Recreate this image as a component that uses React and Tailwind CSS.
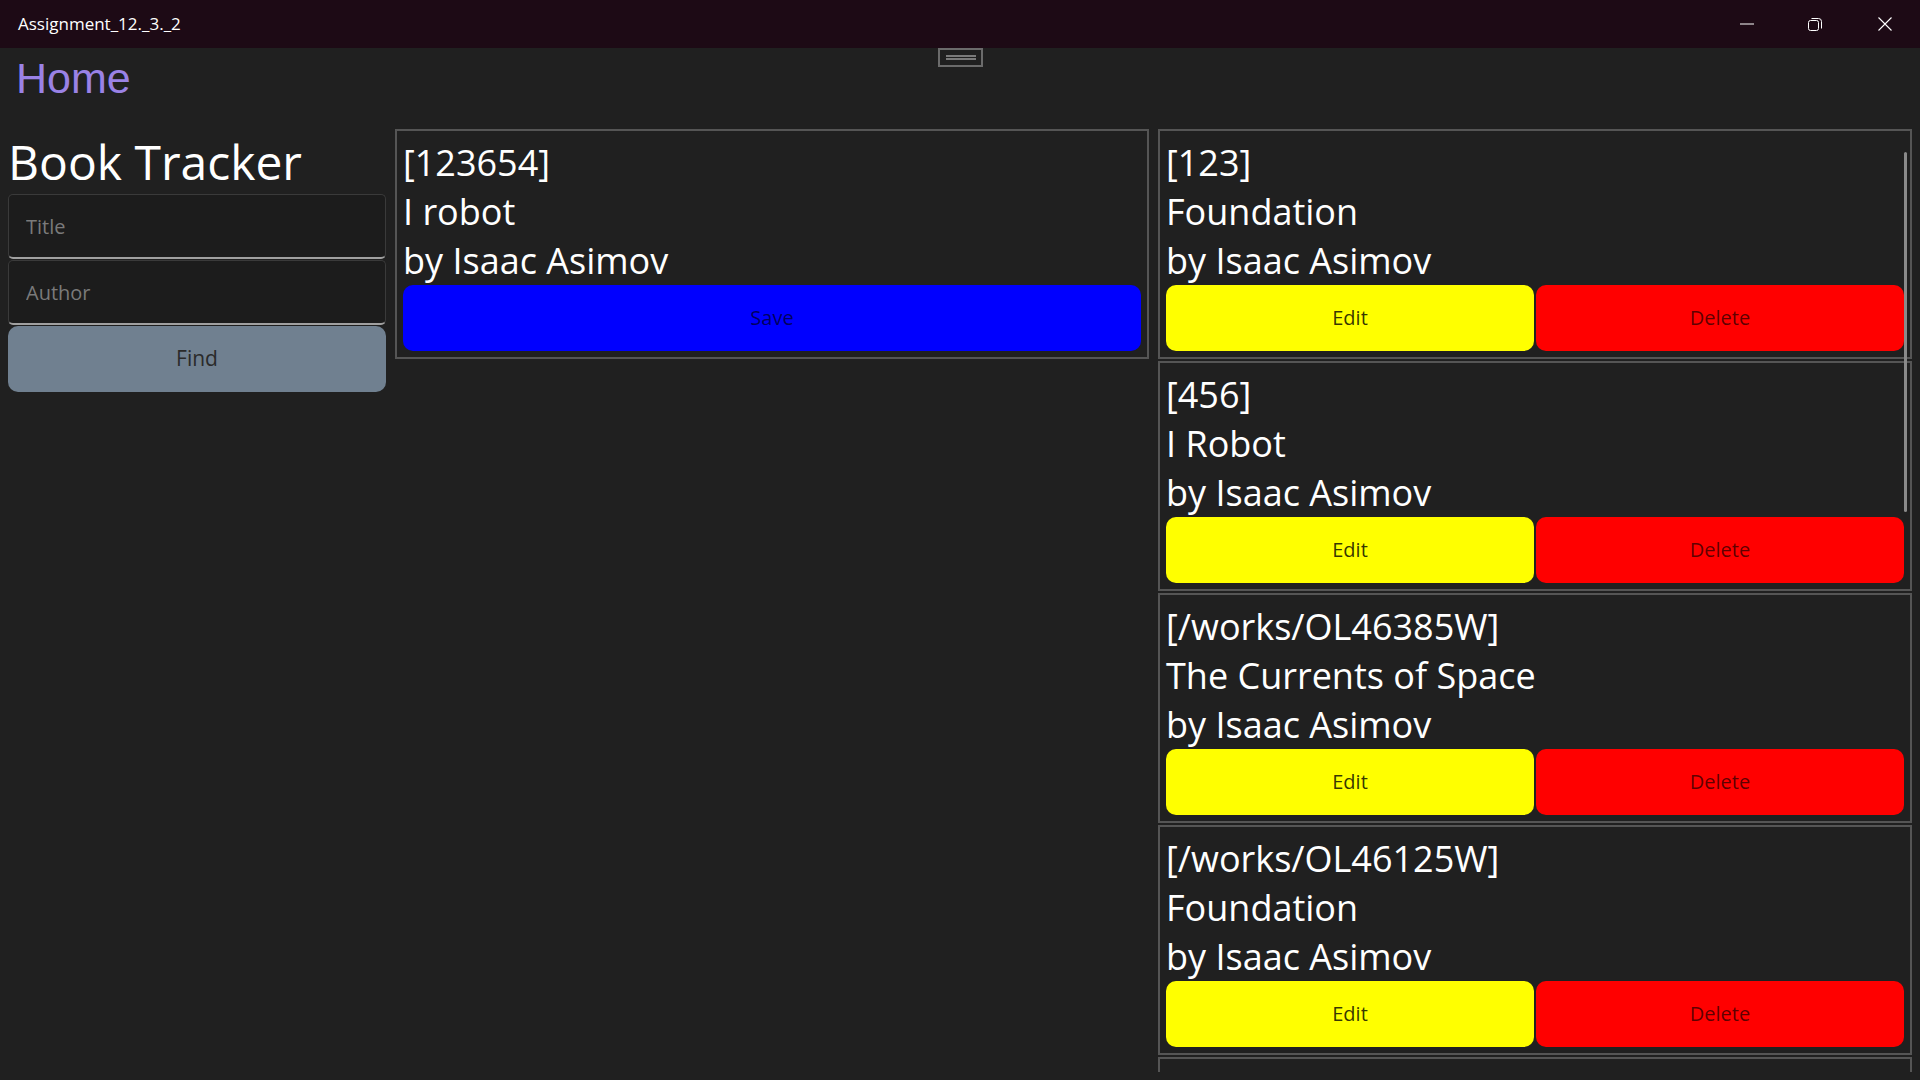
import React from 'react';

const books = [
    { id: '123', title: 'Foundation', author: 'Isaac Asimov' },
    { id: '456', title: 'I Robot', author: 'Isaac Asimov' },
    { id: '/works/OL46385W', title: 'The Currents of Space', author: 'Isaac Asimov' },
    { id: '/works/OL46125W', title: 'Foundation', author: 'Isaac Asimov' },
];

const BookLines = ({ book }) => (
    <div className="text-[36px] leading-[49px] text-white">
        <div>[{book.id}]</div>
        <div>{book.title}</div>
        <div>by {book.author}</div>
    </div>
);

const TitleBar = () => (
    <div className="h-[48px] bg-[#1d0a15] flex items-center justify-between text-white">
        <div className="pl-[18px] text-[17px]">Assignment_12._3._2</div>
        <div className="flex items-center h-full pr-[6px]">
            <div className="w-[58px] h-full flex items-center justify-center">
                <svg width="16" height="16" viewBox="0 0 16 16"><path d="M1 8h14" stroke="white" strokeWidth="1" /></svg>
            </div>
            <div className="w-[58px] h-full flex items-center justify-center ml-[10px]">
                <svg width="16" height="16" viewBox="0 0 16 16" fill="none" stroke="white" strokeWidth="1">
                    <rect x="1.5" y="4.5" width="10" height="10" rx="2" />
                    <path d="M4.5 2.5h7a3 3 0 0 1 3 3v7" />
                </svg>
            </div>
            <div className="w-[58px] h-full flex items-center justify-center ml-[12px]">
                <svg width="16" height="16" viewBox="0 0 16 16"><path d="M1.5 1.5l13 13M14.5 1.5l-13 13" stroke="white" strokeWidth="1.1" /></svg>
            </div>
        </div>
    </div>
);

const App = () => {
    return (
        <div className="w-[1920px] h-[1080px] overflow-hidden bg-[#202020] flex flex-col" style={{ fontFamily: '"Open Sans", "Noto Sans", sans-serif' }}>
            <TitleBar />
            <div className="relative h-[81px]">
                <div className="absolute left-[938px] top-0 w-[45px] h-[19px] border-2 border-[#6b6b6b] flex flex-col items-center justify-center gap-[1px]">
                    <div className="w-[30px] h-[2px] bg-[#7a7a7a]" />
                    <div className="w-[30px] h-[2px] bg-[#7a7a7a]" />
                </div>
                <div className="pl-[16px] pt-[5px] text-[43px] leading-[50px] text-[#9a82e6]" style={{ fontFamily: '"Liberation Sans", Arial, sans-serif' }}>
                    Home
                </div>
            </div>

            <div className="flex-1 min-h-0 grid grid-cols-[378px_1fr_1fr] gap-[9px] px-[8px] pb-[8px]">
                <div className="flex flex-col">
                    <div className="text-[48px] leading-[65px] text-white">Book Tracker</div>
                    <input
                        placeholder="Title"
                        className="h-[65px] rounded-[5px] border border-[#3a3a3a] border-b-2 border-b-[#a0a0a0] bg-[#1c1c1c] px-[17px] text-[20px] text-white placeholder-[#7a7a7a] outline-none"
                    />
                    <input
                        placeholder="Author"
                        className="mt-[1px] h-[65px] rounded-[5px] border border-[#3a3a3a] border-b-2 border-b-[#a0a0a0] bg-[#1c1c1c] px-[17px] text-[20px] text-white placeholder-[#7a7a7a] outline-none"
                    />
                    <button className="mt-[1px] h-[66px] rounded-[10px] bg-[#708090] text-[21px] text-[#2a2a2a]">Find</button>
                </div>

                <div className="self-start border-2 border-[#555555] pt-[7px] px-[6px] pb-[6px]">
                    <BookLines book={{ id: '123654', title: 'I robot', author: 'Isaac Asimov' }} />
                    <button className="w-full h-[66px] rounded-[10px] bg-[#0000ff] text-[20px] text-black/65">Save</button>
                </div>

                <div className="relative overflow-hidden flex flex-col gap-[2px]">
                    {books.map((book, i) => (
                        <div key={i} className="shrink-0 border-2 border-[#555555] pt-[7px] px-[6px] pb-[6px]">
                            <BookLines book={book} />
                            <div className="flex gap-[2px]">
                                <button className="flex-1 h-[66px] rounded-[10px] bg-[#ffff00] text-[20px] text-black/80">Edit</button>
                                <button className="flex-1 h-[66px] rounded-[10px] bg-[#ff0000] text-[20px] text-black/65">Delete</button>
                            </div>
                        </div>
                    ))}
                    <div className="shrink-0 h-[100px] border-2 border-[#555555]" />
                    <div className="absolute right-[5px] top-[23px] w-[3px] h-[360px] rounded-full bg-[#8a8a8a]" />
                </div>
            </div>
        </div>
    );
};

export default App;
